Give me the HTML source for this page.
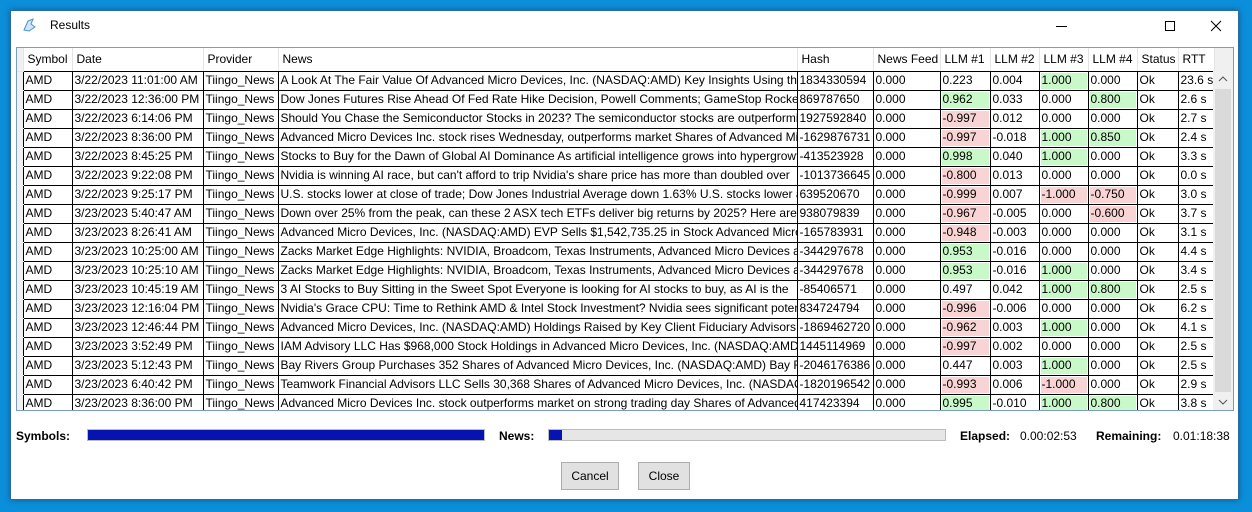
<!DOCTYPE html>
<html><head><meta charset="utf-8"><style>
*{margin:0;padding:0;box-sizing:border-box}
body{width:1252px;height:512px;background:#0b8fdb;font-family:"Liberation Sans",sans-serif;font-size:12px;color:#000;position:relative;overflow:hidden}
#win{position:absolute;left:10px;top:10px;width:1229px;height:490px;background:#fff;border:1px solid #2a6da6;box-shadow:0 0 6px rgba(0,0,0,.35)}
.t{position:absolute;left:39px;top:7px;font-size:12px}
#grid{position:absolute;left:5px;top:36px;width:1218px;height:364px;border:1px solid #7a9cc0;overflow:hidden;background:#fff}
table{border-collapse:collapse;table-layout:fixed;position:absolute;left:0;top:0;width:1216px}
td,th{height:19px;border-left:1px solid #000;border-bottom:1px solid #000;white-space:nowrap;overflow:hidden;padding:0 2px;text-align:left;font-weight:normal;line-height:17px}
th{height:23px;border-left:1px solid #e4e4e4;border-bottom:1px solid #000;padding:0 4px}
td.rh,th.rh{background:#f0f0f0;border-left:none;border-bottom:1px solid #f0f0f0;padding:0}
th.rh{border-bottom:1px solid #e4e4e4}
th.sb{background:#f0f0f0;border-left:1px solid #e4e4e4;border-bottom:none}
.g{background:#c9f9c9;box-shadow:inset 0 0 0 1px #fff}
.r{background:#f9d4d4;box-shadow:inset 0 0 0 1px #fff}
#sb{position:absolute;left:1196px;top:22px;width:20px;height:341px;background:#f0f0f0}
.lbl{position:absolute;font-weight:bold;font-size:12px}
.val{position:absolute;font-size:12px}
.bar{position:absolute;height:12px;background:#e6e6e6;border:1px solid #bcbcbc}
.fill{position:absolute;left:0;top:0;height:10px;background:#0613b0}
.btn{position:absolute;top:451px;height:28px;background:#e1e1e1;border:1px solid #adadad;text-align:center;line-height:26px;font-size:12px}
</style></head><body>
<div id="win">
<svg style="position:absolute;left:10px;top:6px" width="16" height="16" viewBox="0 0 16 16"><path d="M3 13 L7 4 L12 2 L10 7 L14 10 L8 14 Z" fill="#cfe6f7" stroke="#4a90d0" stroke-width="1"/></svg>
<div class="t">Results</div>
<div style="position:absolute;left:1045px;top:15px;width:11px;height:1px;background:#000"></div>
<div style="position:absolute;left:1154px;top:10px;width:10px;height:10px;border:1px solid #000"></div>
<svg style="position:absolute;left:1199px;top:9px" width="12" height="12"><path d="M1 1L11 11M11 1L1 11" stroke="#000" stroke-width="1"/></svg>
<div id="grid">
<table>
<colgroup><col style="width:6px"><col style="width:49px"><col style="width:131px"><col style="width:75px"><col style="width:519px"><col style="width:76px"><col style="width:67px"><col style="width:50px"><col style="width:49px"><col style="width:49px"><col style="width:49px"><col style="width:41px"><col style="width:36px"><col style="width:19px"></colgroup>
<tr><th class="rh"></th><th>Symbol</th><th>Date</th><th>Provider</th><th>News</th><th>Hash</th><th>News Feed</th><th>LLM #1</th><th>LLM #2</th><th>LLM #3</th><th>LLM #4</th><th>Status</th><th>RTT</th><th class="sb"></th></tr>
<tr><td class="rh"></td><td>AMD</td><td>3/22/2023 11:01:00 AM</td><td>Tiingo_News</td><td>A Look At The Fair Value Of Advanced Micro Devices, Inc. (NASDAQ:AMD) Key Insights Using the</td><td>1834330594</td><td>0.000</td><td>0.223</td><td>0.004</td><td class="g">1.000</td><td>0.000</td><td>Ok</td><td>23.6 s</td></tr>
<tr><td class="rh"></td><td>AMD</td><td>3/22/2023 12:36:00 PM</td><td>Tiingo_News</td><td>Dow Jones Futures Rise Ahead Of Fed Rate Hike Decision, Powell Comments; GameStop Rockets 5</td><td>869787650</td><td>0.000</td><td class="g">0.962</td><td>0.033</td><td>0.000</td><td class="g">0.800</td><td>Ok</td><td>2.6 s</td></tr>
<tr><td class="rh"></td><td>AMD</td><td>3/22/2023 6:14:06 PM</td><td>Tiingo_News</td><td>Should You Chase the Semiconductor Stocks in 2023? The semiconductor stocks are outperforming</td><td>1927592840</td><td>0.000</td><td class="r">-0.997</td><td>0.012</td><td>0.000</td><td>0.000</td><td>Ok</td><td>2.7 s</td></tr>
<tr><td class="rh"></td><td>AMD</td><td>3/22/2023 8:36:00 PM</td><td>Tiingo_News</td><td>Advanced Micro Devices Inc. stock rises Wednesday, outperforms market Shares of Advanced Micro</td><td>-1629876731</td><td>0.000</td><td class="r">-0.997</td><td>-0.018</td><td class="g">1.000</td><td class="g">0.850</td><td>Ok</td><td>2.4 s</td></tr>
<tr><td class="rh"></td><td>AMD</td><td>3/22/2023 8:45:25 PM</td><td>Tiingo_News</td><td>Stocks to Buy for the Dawn of Global AI Dominance As artificial intelligence grows into hypergrowth</td><td>-413523928</td><td>0.000</td><td class="g">0.998</td><td>0.040</td><td class="g">1.000</td><td>0.000</td><td>Ok</td><td>3.3 s</td></tr>
<tr><td class="rh"></td><td>AMD</td><td>3/22/2023 9:22:08 PM</td><td>Tiingo_News</td><td>Nvidia is winning AI race, but can't afford to trip Nvidia's share price has more than doubled over</td><td>-1013736645</td><td>0.000</td><td class="r">-0.800</td><td>0.013</td><td>0.000</td><td>0.000</td><td>Ok</td><td>0.0 s</td></tr>
<tr><td class="rh"></td><td>AMD</td><td>3/22/2023 9:25:17 PM</td><td>Tiingo_News</td><td>U.S. stocks lower at close of trade; Dow Jones Industrial Average down 1.63% U.S. stocks lower at</td><td>639520670</td><td>0.000</td><td class="r">-0.999</td><td>0.007</td><td class="r">-1.000</td><td class="r">-0.750</td><td>Ok</td><td>3.0 s</td></tr>
<tr><td class="rh"></td><td>AMD</td><td>3/23/2023 5:40:47 AM</td><td>Tiingo_News</td><td>Down over 25% from the peak, can these 2 ASX tech ETFs deliver big returns by 2025? Here are two</td><td>938079839</td><td>0.000</td><td class="r">-0.967</td><td>-0.005</td><td>0.000</td><td class="r">-0.600</td><td>Ok</td><td>3.7 s</td></tr>
<tr><td class="rh"></td><td>AMD</td><td>3/23/2023 8:26:41 AM</td><td>Tiingo_News</td><td>Advanced Micro Devices, Inc. (NASDAQ:AMD) EVP Sells $1,542,735.25 in Stock Advanced Micro D</td><td>-165783931</td><td>0.000</td><td class="r">-0.948</td><td>-0.003</td><td>0.000</td><td>0.000</td><td>Ok</td><td>3.1 s</td></tr>
<tr><td class="rh"></td><td>AMD</td><td>3/23/2023 10:25:00 AM</td><td>Tiingo_News</td><td>Zacks Market Edge Highlights: NVIDIA, Broadcom, Texas Instruments, Advanced Micro Devices and</td><td>-344297678</td><td>0.000</td><td class="g">0.953</td><td>-0.016</td><td>0.000</td><td>0.000</td><td>Ok</td><td>4.4 s</td></tr>
<tr><td class="rh"></td><td>AMD</td><td>3/23/2023 10:25:10 AM</td><td>Tiingo_News</td><td>Zacks Market Edge Highlights: NVIDIA, Broadcom, Texas Instruments, Advanced Micro Devices and</td><td>-344297678</td><td>0.000</td><td class="g">0.953</td><td>-0.016</td><td class="g">1.000</td><td>0.000</td><td>Ok</td><td>3.4 s</td></tr>
<tr><td class="rh"></td><td>AMD</td><td>3/23/2023 10:45:19 AM</td><td>Tiingo_News</td><td>3 AI Stocks to Buy Sitting in the Sweet Spot Everyone is looking for AI stocks to buy, as AI is the</td><td>-85406571</td><td>0.000</td><td>0.497</td><td>0.042</td><td class="g">1.000</td><td class="g">0.800</td><td>Ok</td><td>2.5 s</td></tr>
<tr><td class="rh"></td><td>AMD</td><td>3/23/2023 12:16:04 PM</td><td>Tiingo_News</td><td>Nvidia's Grace CPU: Time to Rethink AMD &amp; Intel Stock Investment? Nvidia sees significant potential</td><td>834724794</td><td>0.000</td><td class="r">-0.996</td><td>-0.006</td><td>0.000</td><td>0.000</td><td>Ok</td><td>6.2 s</td></tr>
<tr><td class="rh"></td><td>AMD</td><td>3/23/2023 12:46:44 PM</td><td>Tiingo_News</td><td>Advanced Micro Devices, Inc. (NASDAQ:AMD) Holdings Raised by Key Client Fiduciary Advisors LLC</td><td>-1869462720</td><td>0.000</td><td class="r">-0.962</td><td>0.003</td><td class="g">1.000</td><td>0.000</td><td>Ok</td><td>4.1 s</td></tr>
<tr><td class="rh"></td><td>AMD</td><td>3/23/2023 3:52:49 PM</td><td>Tiingo_News</td><td>IAM Advisory LLC Has $968,000 Stock Holdings in Advanced Micro Devices, Inc. (NASDAQ:AMD) IAM</td><td>1445114969</td><td>0.000</td><td class="r">-0.997</td><td>0.002</td><td>0.000</td><td>0.000</td><td>Ok</td><td>2.5 s</td></tr>
<tr><td class="rh"></td><td>AMD</td><td>3/23/2023 5:12:43 PM</td><td>Tiingo_News</td><td>Bay Rivers Group Purchases 352 Shares of Advanced Micro Devices, Inc. (NASDAQ:AMD) Bay Rivers</td><td>-2046176386</td><td>0.000</td><td>0.447</td><td>0.003</td><td class="g">1.000</td><td>0.000</td><td>Ok</td><td>2.5 s</td></tr>
<tr><td class="rh"></td><td>AMD</td><td>3/23/2023 6:40:42 PM</td><td>Tiingo_News</td><td>Teamwork Financial Advisors LLC Sells 30,368 Shares of Advanced Micro Devices, Inc. (NASDAQ:AMD)</td><td>-1820196542</td><td>0.000</td><td class="r">-0.993</td><td>0.006</td><td class="r">-1.000</td><td>0.000</td><td>Ok</td><td>2.9 s</td></tr>
<tr><td class="rh"></td><td>AMD</td><td>3/23/2023 8:36:00 PM</td><td>Tiingo_News</td><td>Advanced Micro Devices Inc. stock outperforms market on strong trading day Shares of Advanced</td><td>417423394</td><td>0.000</td><td class="g">0.995</td><td>-0.010</td><td class="g">1.000</td><td class="g">0.800</td><td>Ok</td><td>3.8 s</td></tr>
</table>
<div id="sb">
<svg style="position:absolute;left:5px;top:6px" width="10" height="6"><path d="M1 5L5 1L9 5" stroke="#555" fill="none"/></svg>
<div style="position:absolute;left:2px;top:19px;width:16px;height:303px;background:#dadada"></div>
<svg style="position:absolute;left:5px;top:329px" width="10" height="6"><path d="M1 1L5 5L9 1" stroke="#555" fill="none"/></svg>
</div>
</div>
<div class="lbl" style="left:5px;top:418px">Symbols:</div>
<div class="bar" style="left:76px;top:418px;width:398px"><div class="fill" style="width:396px"></div></div>
<div class="lbl" style="left:488px;top:418px">News:</div>
<div class="bar" style="left:537px;top:418px;width:398px"><div class="fill" style="width:13px"></div></div>
<div class="lbl" style="left:949px;top:418px">Elapsed:</div>
<div class="val" style="left:1009px;top:418px">0.00:02:53</div>
<div class="lbl" style="left:1085px;top:418px">Remaining:</div>
<div class="val" style="left:1162px;top:418px">0.01:18:38</div>
<div class="btn" style="left:550px;width:58px">Cancel</div>
<div class="btn" style="left:627px;width:52px">Close</div>
</div>
</body></html>
